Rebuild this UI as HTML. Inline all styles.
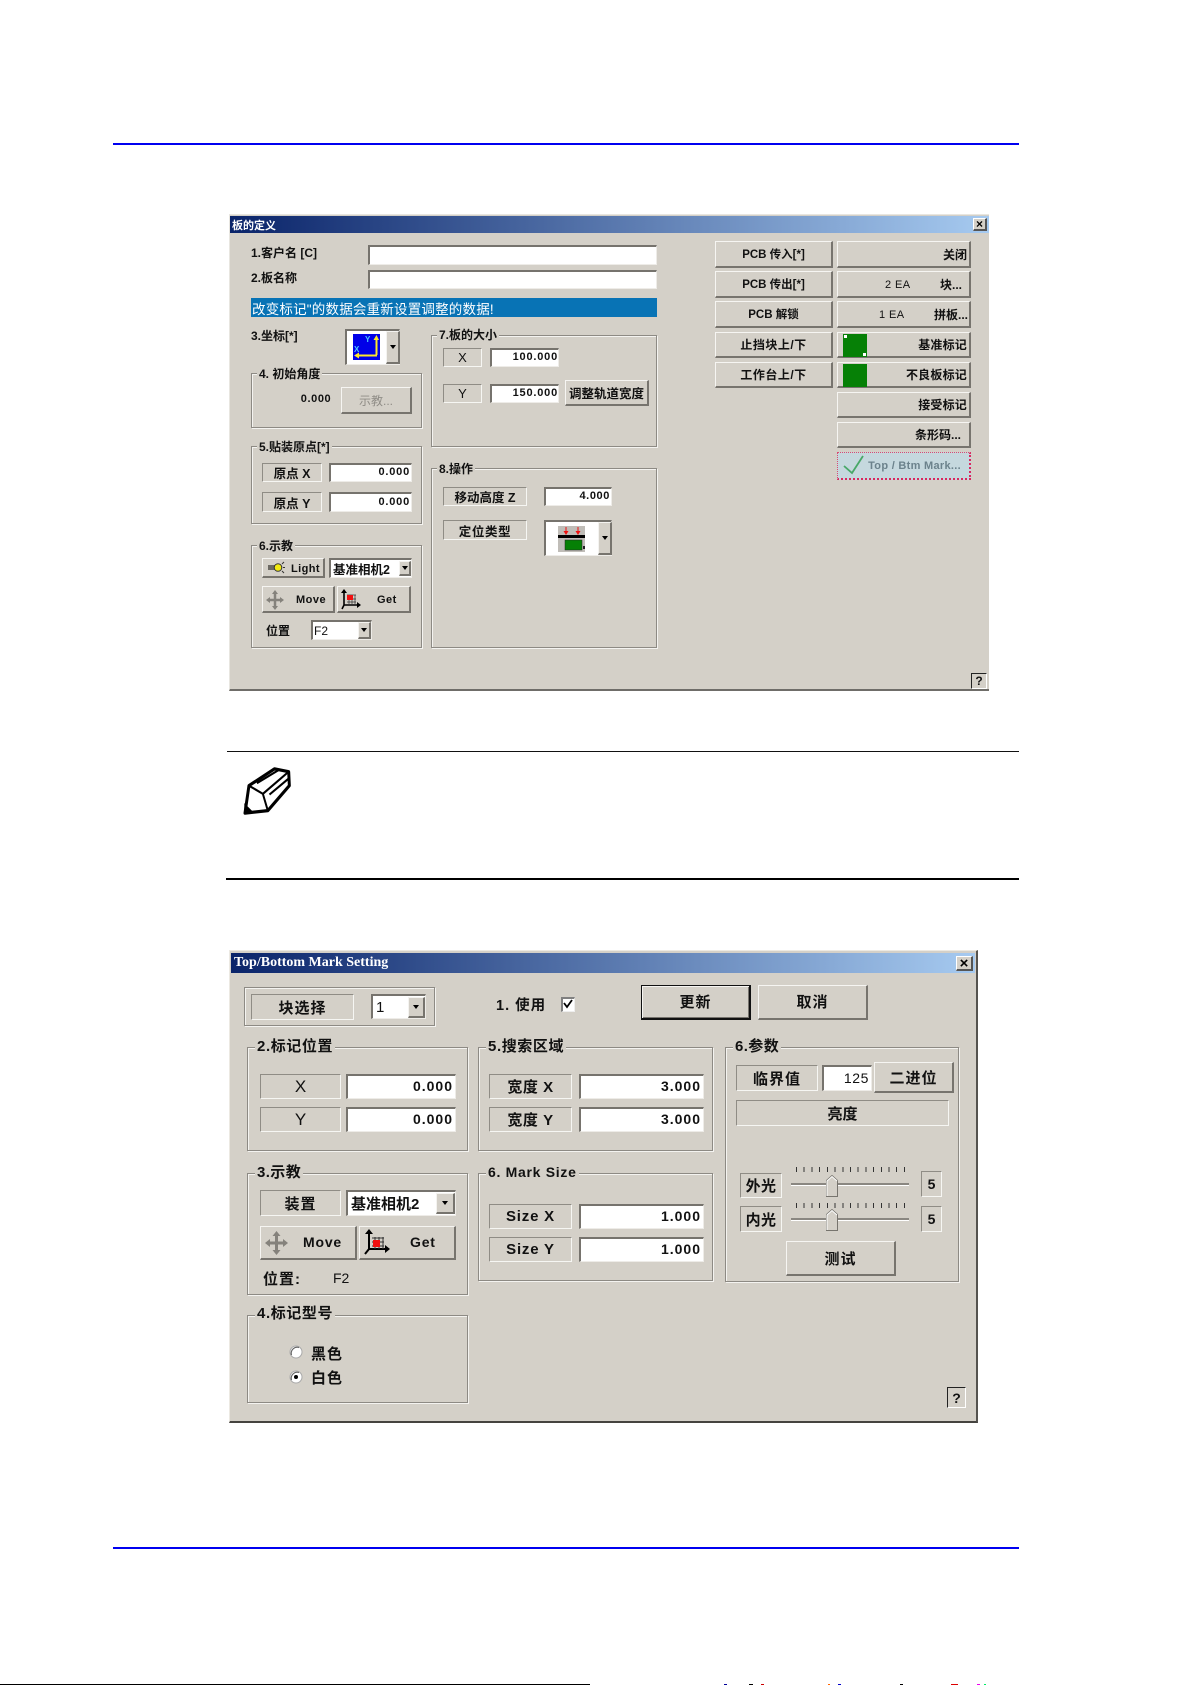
<!DOCTYPE html>
<html lang="zh"><head><meta charset="utf-8"><title>板的定义</title>
<style>
html,body{margin:0;padding:0;background:#fff}
#p{position:relative;width:1191px;height:1685px;overflow:hidden;background:#fff;font:bold 12px "Liberation Sans","Noto Sans CJK SC",sans-serif;color:#111}
#p div,#p span.a,#p svg{position:absolute;box-sizing:border-box}
.w{left:0;top:0;width:1191px;height:1685px;filter:blur(.3px)}
.dlg{background:#d4d0c8}
.c{display:flex;align-items:center;justify-content:center;white-space:nowrap}
.r{display:flex;align-items:center;justify-content:flex-end;white-space:nowrap;padding-right:4px}
.r.ed{padding-bottom:2px}
.l{display:flex;align-items:center;white-space:nowrap}
.g{border:1px solid #8d8a84;box-shadow:inset 1px 1px 0 #f4f3f0,1px 1px 0 #f4f3f0}
.lg{background:#d4d0c8;padding:0 2px;white-space:nowrap;line-height:14px}
.lab{border:1px solid;border-color:#8f8c85 #f6f6f3 #f6f6f3 #8f8c85}
.ed{background:#fff;border-style:solid;border-width:2px 1px 1px 2px;border-color:#76736d #eeece8 #eeece8 #76736d}
.btn{background:#d4d0c8;border-style:solid;border-width:1px 2px 2px 1px;border-color:#f6f5f2 #77746e #77746e #f6f5f2}
.dd{background:#d4d0c8;border-style:solid;border-width:1px 2px 2px 1px;border-color:#f4f3f0 #77746e #77746e #f4f3f0}
.dd:after{content:"";position:absolute;left:50%;top:50%;margin:-2px 0 0 -3px;border:3px solid transparent;border-top:4px solid #000;border-bottom:0}
.d2{font-size:15px}
</style></head><body><div id="p">
<div style="left:113px;top:143px;width:906px;height:2px;background:#0000f0"></div>

<!-- Dialog 1 -->
<div class="w">
<div class="dlg" style="left:229px;top:214px;width:760px;height:477px;border-top:1px solid #e8e6e0;border-left:1px solid #e8e6e0;border-bottom:2px solid #6f6d69"></div>
<div class="l" style="left:230px;top:216px;width:759px;height:17px;background:linear-gradient(90deg,#0a246a,#a6caf0);color:#fff;font-size:11px;padding-left:2px">板的定义</div>
<div class="c btn" style="left:973px;top:218px;width:14px;height:13px;font:bold 12px 'Liberation Sans',sans-serif;color:#000;border-color:#fff #555 #555 #fff">×</div>

<div class="l" style="left:251px;top:244px;width:80px;height:16px;font-size:12px">1.客户名 [C]</div>
<div class="ed" style="left:368px;top:245px;width:289px;height:20px"></div>
<div class="l" style="left:251px;top:269px;width:80px;height:16px;font-size:12px">2.板名称</div>
<div class="ed" style="left:368px;top:270px;width:289px;height:19px"></div>
<div class="l" style="left:251px;top:298px;width:406px;height:19px;background:#0873b5;color:#fff;font-size:13.500px;font-weight:400;padding-left:1px;letter-spacing:.2px">改变标记"的数据会重新设置调整的数据!</div>

<div class="l" style="left:251px;top:327px;width:60px;height:16px;font-size:12px">3.坐标[*]</div>
<div class="ed" style="left:345px;top:329px;width:55px;height:36px"></div>
<svg style="left:353px;top:334px" width="27" height="26" viewBox="0 0 27 26"><rect width="27" height="26" fill="#0000e8"/><path d="M23.5 21V5M3 21.5H24" stroke="#ffe82a" stroke-width="2" fill="none"/><path d="M20.500 6L23.500 1 26 6ZM1 21.500L6 18.500V24.500Z" fill="#ffe82a"/><text x="12" y="8" font-size="8" fill="#4fc8ff" font-family="Liberation Sans">Y</text><text x="1" y="18" font-size="8" fill="#4fc8ff" font-family="Liberation Sans">X</text></svg>
<div class="dd" style="left:386px;top:331px;width:14px;height:33px"></div>

<div class="g" style="left:251px;top:373px;width:171px;height:55px"></div>
<div class="lg" style="left:257px;top:367px;font-size:12px">4. 初始角度</div>
<div class="c" style="left:298px;top:391px;width:36px;height:16px;font-size:11px;letter-spacing:.6px">0.000</div>
<div class="c btn" style="left:341px;top:387px;width:71px;height:27px;color:#8f8c86;font-size:12px;font-weight:400">示教...</div>

<div class="g" style="left:251px;top:446px;width:171px;height:78px"></div>
<div class="lg" style="left:257px;top:440px;font-size:12px">5.贴装原点[*]</div>
<div class="c lab" style="left:262px;top:463px;width:60px;height:19px;font-size:12.500px">原点 X</div>
<div class="r ed" style="left:329px;top:463px;width:83px;height:19px;font-size:11px;letter-spacing:.8px;padding-right:1px">0.000</div>
<div class="c lab" style="left:262px;top:492px;width:60px;height:20px;font-size:12.500px">原点 Y</div>
<div class="r ed" style="left:329px;top:492px;width:83px;height:20px;font-size:11px;letter-spacing:.8px;padding-right:1px">0.000</div>

<div class="g" style="left:251px;top:545px;width:171px;height:103px"></div>
<div class="lg" style="left:257px;top:539px;font-size:12px">6.示教</div>
<div class="btn" style="left:262px;top:558px;width:63px;height:20px"></div>
<svg style="left:268px;top:561px" width="17" height="13" viewBox="0 0 17 13"><rect x="0" y="4" width="7" height="5" fill="#6d6a64"/><circle cx="10" cy="6.500" r="3.800" fill="#f2ea10" stroke="#333" stroke-width="1"/><path d="M14 3l2-2M14 10l2 2M15 6.500h2" stroke="#333"/></svg>
<div class="l" style="left:291px;top:559px;width:34px;height:20px;font-size:11px;letter-spacing:.4px">Light</div>
<div class="l ed" style="left:329px;top:558px;width:83px;height:20px;font-size:12.500px;padding-left:2px">基准相机2</div>
<div class="dd" style="left:399px;top:561px;width:12px;height:15px"></div>
<div class="btn" style="left:262px;top:586px;width:73px;height:27px"></div>
<svg style="left:266px;top:590px" width="18" height="20" viewBox="0 0 18 20"><path d="M9 3V17M2 10H16" stroke="#85827c" stroke-width="2.500"/><path d="M9 0l3 4H6zM9 20l3-4H6zM0 10l4-3v6zM18 10l-4-3v6z" fill="#85827c"/></svg>
<div class="l" style="left:296px;top:586px;width:36px;height:27px;font-size:11px;letter-spacing:.5px">Move</div>
<div class="btn" style="left:337px;top:586px;width:74px;height:27px"></div>
<svg style="left:341px;top:589px" width="20" height="21" viewBox="0 0 20 21"><path d="M3 3V16L1 20M3 16H18" stroke="#000" stroke-width="1.600" fill="none"/><path d="M3 0l3 4H0zM20 16l-4-3v6z" fill="#000"/><path d="M6 6H15M6 10H15M6 13H15M8 6V16M11 6V16M14 6V16" stroke="#333" stroke-width=".7"/><rect x="6" y="6" width="6" height="5" fill="#f01010"/></svg>
<div class="l" style="left:377px;top:586px;width:30px;height:27px;font-size:11px;letter-spacing:.5px">Get</div>
<div class="l" style="left:266px;top:622px;width:30px;height:16px;font-size:12px">位置</div>
<div class="l ed" style="left:311px;top:620px;width:61px;height:20px;font-size:12px;font-weight:400;padding-left:1px">F2</div>
<div class="dd" style="left:358px;top:622px;width:13px;height:17px"></div>

<div class="g" style="left:431px;top:335px;width:226px;height:112px"></div>
<div class="lg" style="left:437px;top:328px;font-size:12px">7.板的大小</div>
<div class="c lab" style="left:443px;top:348px;width:39px;height:19px;font-weight:400;font-size:13px">X</div>
<div class="r ed" style="left:490px;top:348px;width:69px;height:19px;font-size:11px;letter-spacing:.8px;padding-right:0">100.000</div>
<div class="c lab" style="left:443px;top:384px;width:39px;height:19px;font-weight:400;font-size:13px">Y</div>
<div class="r ed" style="left:490px;top:384px;width:69px;height:19px;font-size:11px;letter-spacing:.8px;padding-right:0">150.000</div>
<div class="c btn" style="left:565px;top:380px;width:84px;height:26px;font-size:12.500px">调整轨道宽度</div>

<div class="g" style="left:431px;top:468px;width:226px;height:180px"></div>
<div class="lg" style="left:437px;top:462px;font-size:12px">8.操作</div>
<div class="c lab" style="left:443px;top:487px;width:84px;height:19px;font-size:12.500px">移动高度 Z</div>
<div class="r ed" style="left:544px;top:487px;width:68px;height:19px;font-size:11px;letter-spacing:.6px;padding-right:1px">4.000</div>
<div class="c lab" style="left:443px;top:520px;width:84px;height:20px;font-size:12.500px;letter-spacing:.6px">定位类型</div>
<div class="ed" style="left:544px;top:520px;width:68px;height:36px"></div>
<svg style="left:558px;top:526px" width="27" height="26" viewBox="0 0 27 26"><rect width="27" height="26" fill="#c0bdb8"/><path d="M8 1V7M20 1V7" stroke="#f01010"/><path d="M8 9L5.500 5H10.500ZM20 9L17.500 5H22.500Z" fill="#f01010"/><rect y="9" width="27" height="3" fill="#000"/><rect x="7" y="14" width="17" height="10" fill="#058005" stroke="#222" stroke-width=".5"/><rect x="25" y="20" width="2" height="3" fill="#222"/></svg>
<div class="dd" style="left:598px;top:522px;width:14px;height:33px"></div>

<div class="c btn" style="left:715px;top:241px;width:118px;height:27px;font-size:11.500px">PCB 传入[*]</div>
<div class="c btn" style="left:715px;top:271px;width:118px;height:27px;font-size:11.500px">PCB 传出[*]</div>
<div class="c btn" style="left:715px;top:301px;width:118px;height:27px;font-size:11.500px">PCB 解锁</div>
<div class="c btn" style="left:715px;top:332px;width:118px;height:26px;font-size:12px;letter-spacing:.5px">止挡块上/下</div>
<div class="c btn" style="left:715px;top:362px;width:118px;height:26px;font-size:12px;letter-spacing:.5px">工作台上/下</div>

<div class="r btn" style="left:837px;top:241px;width:134px;height:27px;padding-right:2px">关闭</div>
<div class="btn" style="left:837px;top:271px;width:134px;height:27px"></div>
<div class="l" style="left:885px;top:271px;width:30px;height:27px;font-size:11px;font-weight:400;letter-spacing:.4px">2 EA</div>
<div class="l" style="left:940px;top:271px;width:30px;height:27px;font-size:12px">块...</div>
<div class="btn" style="left:837px;top:301px;width:134px;height:27px"></div>
<div class="l" style="left:879px;top:301px;width:30px;height:27px;font-size:11px;font-weight:400;letter-spacing:.4px">1 EA</div>
<div class="l" style="left:934px;top:301px;width:36px;height:27px;font-size:12px">拼板...</div>
<div class="r btn" style="left:837px;top:332px;width:134px;height:26px;padding-right:2px;letter-spacing:.2px">基准标记</div>
<div style="left:843px;top:334px;width:24px;height:23px;background:#068006"></div>
<div style="left:844px;top:335px;width:3px;height:3px;background:#fff"></div>
<div style="left:863px;top:353px;width:3px;height:3px;background:#fff"></div>
<div class="r btn" style="left:837px;top:362px;width:134px;height:26px;padding-right:2px;letter-spacing:.2px">不良板标记</div>
<div style="left:843px;top:364px;width:24px;height:23px;background:#068006"></div>
<div class="r btn" style="left:837px;top:392px;width:134px;height:26px;padding-right:2px;letter-spacing:.2px">接受标记</div>
<div class="r btn" style="left:837px;top:422px;width:134px;height:26px;padding-right:8px">条形码...</div>
<div class="r" style="left:837px;top:452px;width:134px;height:28px;background:#c5d8de;border:1px dotted #d94a72;border-bottom:2px dotted #d9285f;border-right:2px dotted #d9285f;color:#6b828c;font-size:11px;padding-right:8px;letter-spacing:.3px;padding-top:1px">Top / Btm Mark...</div>
<svg style="left:843px;top:454px" width="22" height="22" viewBox="0 0 22 22"><path d="M1 12L9 19 20 2" stroke="#48a868" stroke-width="1.800" fill="none"/></svg>
<div class="c" style="left:971px;top:673px;width:16px;height:16px;border:1px solid;border-color:#222 #fff #fff #222;font:bold 12px 'Liberation Sans',sans-serif">?</div>
</div>

<!-- Note -->
<div style="left:227px;top:751px;width:792px;height:1px;background:#111"></div>
<svg style="left:243px;top:766px" width="48" height="50" viewBox="130 100 145 140" preserveAspectRatio="none"><path d="M148 155L225 108 268 116 270 155 205 225 136 232Z" fill="#fff" stroke="#000" stroke-width="9" stroke-linejoin="round"/><path d="M148 155L190 178 205 225M190 178L268 116M172 148L240 110M210 180L268 135" stroke="#000" stroke-width="6" fill="none"/><path d="M134 235V204L162 230Z" fill="#000"/></svg>
<div style="left:226px;top:878px;width:793px;height:2px;background:#000"></div>

<!-- Dialog 2 -->
<div class="w d2">
<div class="dlg" style="left:229px;top:950px;width:749px;height:473px;border-top:1px solid #ece9e2;border-left:1px solid #ece9e2;border-right:2px solid #55534f;border-bottom:2px solid #45433f"></div>
<div class="l" style="left:231px;top:953px;width:744px;height:20px;background:linear-gradient(90deg,#0a246a,#a6caf0);color:#fff;font:bold 14px 'Liberation Serif',serif;padding-left:3px">Top/Bottom Mark Setting</div>
<div class="c btn" style="left:956px;top:956px;width:17px;height:15px;font:bold 15px 'Liberation Sans',sans-serif;color:#000;border-color:#fff #555 #555 #fff">×</div>

<div class="g" style="left:244px;top:987px;width:191px;height:39px"></div>
<div class="c lab" style="left:251px;top:994px;width:103px;height:26px;letter-spacing:1px">块选择</div>
<div class="l ed" style="left:371px;top:994px;width:55px;height:25px;padding-left:3px;font-size:15px;font-weight:400">1</div>
<div class="dd" style="left:408px;top:997px;width:17px;height:21px"></div>
<div class="l" style="left:496px;top:995px;width:60px;height:18px;font-size:14.500px;letter-spacing:1px">1. 使用</div>
<div class="ed" style="left:561px;top:997px;width:14px;height:15px;border-color:#808080 #eee #eee #808080"></div>
<svg style="left:563px;top:999px" width="10" height="10" viewBox="0 0 10 10"><path d="M1 4L4 8 9 1" stroke="#000" stroke-width="1.800" fill="none"/></svg>
<div class="c btn" style="left:641px;top:985px;width:110px;height:35px;border:2px solid #111;border-left-width:1px;border-top-width:1px;letter-spacing:1px;box-shadow:inset 1px 1px 0 #f6f5f2,inset -1px -1px 0 #77746e;padding-bottom:2px">更新</div>
<div class="c btn" style="left:758px;top:985px;width:110px;height:35px;letter-spacing:1px;padding-bottom:2px">取消</div>

<div class="g" style="left:247px;top:1047px;width:221px;height:104px"></div>
<div class="lg" style="left:255px;top:1040px;letter-spacing:.6px">2.标记位置</div>
<div class="c lab" style="left:260px;top:1074px;width:81px;height:25px;font-weight:400;font-size:17px">X</div>
<div class="r ed" style="left:346px;top:1074px;width:110px;height:25px;font-size:14px;letter-spacing:1px;padding-right:2px">0.000</div>
<div class="c lab" style="left:260px;top:1107px;width:81px;height:25px;font-weight:400;font-size:17px">Y</div>
<div class="r ed" style="left:346px;top:1107px;width:110px;height:25px;font-size:14px;letter-spacing:1px;padding-right:2px">0.000</div>

<div class="g" style="left:478px;top:1047px;width:235px;height:104px"></div>
<div class="lg" style="left:486px;top:1040px;letter-spacing:.6px">5.搜索区域</div>
<div class="c lab" style="left:489px;top:1074px;width:83px;height:25px;font-size:15px;letter-spacing:.5px">宽度 X</div>
<div class="r ed" style="left:579px;top:1074px;width:125px;height:25px;font-size:14px;letter-spacing:1px;padding-right:2px">3.000</div>
<div class="c lab" style="left:489px;top:1107px;width:83px;height:25px;font-size:15px;letter-spacing:.5px">宽度 Y</div>
<div class="r ed" style="left:579px;top:1107px;width:125px;height:25px;font-size:14px;letter-spacing:1px;padding-right:2px">3.000</div>

<div class="g" style="left:247px;top:1173px;width:221px;height:122px"></div>
<div class="lg" style="left:255px;top:1166px;letter-spacing:.4px">3.示教</div>
<div class="c lab" style="left:260px;top:1190px;width:81px;height:26px;letter-spacing:1px">装置</div>
<div class="l ed" style="left:346px;top:1190px;width:110px;height:26px;padding-left:3px;font-size:15px">基准相机2</div>
<div class="dd" style="left:436px;top:1193px;width:19px;height:21px"></div>
<div class="btn" style="left:260px;top:1226px;width:97px;height:34px"></div>
<svg style="left:265px;top:1231px" width="23" height="24" viewBox="0 0 23 24"><path d="M11.500 4V20M3 12H20" stroke="#85827c" stroke-width="3"/><path d="M11.500 0l4 5h-8zM11.500 24l4-5h-8zM0 12l5-4v8zM23 12l-5-4v8z" fill="#85827c"/></svg>
<div class="l" style="left:303px;top:1225px;width:50px;height:34px;font-size:14px;letter-spacing:.8px">Move</div>
<div class="btn" style="left:359px;top:1226px;width:97px;height:34px"></div>
<svg style="left:364px;top:1229px" width="26" height="27" viewBox="0 0 26 27"><path d="M5 4V20L1 25M5 20H23" stroke="#000" stroke-width="2" fill="none"/><path d="M5 0l4 5H1zM26 20l-5-4v8z" fill="#000"/><path d="M8 9H20M8 13H20M8 17H20M11 8V20M15 8V20M19 8V20" stroke="#333"/><rect x="9" y="11" width="7" height="7" fill="#f01010"/></svg>
<div class="l" style="left:410px;top:1225px;width:40px;height:34px;font-size:14px;letter-spacing:.8px">Get</div>
<div class="l" style="left:263px;top:1269px;width:50px;height:19px;letter-spacing:1px">位置:</div>
<div class="l" style="left:333px;top:1269px;width:30px;height:18px;font-size:14px;font-weight:400">F2</div>

<div class="g" style="left:247px;top:1315px;width:221px;height:88px"></div>
<div class="lg" style="left:255px;top:1307px;letter-spacing:.6px">4.标记型号</div>
<svg style="left:289px;top:1345px" width="14" height="14" viewBox="0 0 14 14"><circle cx="7" cy="7" r="6" fill="#fff" stroke="#aaa" stroke-width="1"/><path d="M2.500 10A6 6 0 0 1 10 2.500" stroke="#666" fill="none" stroke-width="1.200"/></svg>
<div class="l" style="left:311px;top:1344px;width:40px;height:18px;letter-spacing:1px">黑色</div>
<svg style="left:289px;top:1370px" width="14" height="14" viewBox="0 0 14 14"><circle cx="7" cy="7" r="6" fill="#fff" stroke="#aaa" stroke-width="1"/><path d="M2.500 10A6 6 0 0 1 10 2.500" stroke="#666" fill="none" stroke-width="1.200"/><circle cx="7" cy="7" r="2" fill="#000"/></svg>
<div class="l" style="left:311px;top:1368px;width:40px;height:18px;letter-spacing:1px">白色</div>

<div class="g" style="left:478px;top:1173px;width:235px;height:108px"></div>
<div class="lg" style="left:486px;top:1165px;font-size:14px;letter-spacing:.7px">6. Mark Size</div>
<div class="c lab" style="left:489px;top:1204px;width:83px;height:25px;font-size:15px;letter-spacing:.8px">Size X</div>
<div class="r ed" style="left:579px;top:1204px;width:125px;height:25px;font-size:14px;letter-spacing:1px;padding-right:2px">1.000</div>
<div class="c lab" style="left:489px;top:1237px;width:83px;height:25px;font-size:15px;letter-spacing:.8px">Size Y</div>
<div class="r ed" style="left:579px;top:1237px;width:125px;height:25px;font-size:14px;letter-spacing:1px;padding-right:2px">1.000</div>

<div class="g" style="left:725px;top:1047px;width:234px;height:235px"></div>
<div class="lg" style="left:733px;top:1040px;letter-spacing:.4px">6.参数</div>
<div class="c lab" style="left:736px;top:1065px;width:82px;height:26px;letter-spacing:1px">临界值</div>
<div class="r ed" style="left:822px;top:1065px;width:50px;height:26px;font-size:14px;font-weight:400;letter-spacing:.6px;padding-right:2px">125</div>
<div class="c btn" style="left:874px;top:1062px;width:80px;height:31px;letter-spacing:1px">二进位</div>
<div class="c lab" style="left:736px;top:1100px;width:213px;height:26px">亮度</div>

<div class="c lab" style="left:740px;top:1173px;width:42px;height:25px;letter-spacing:.4px">外光</div>
<div style="left:796px;top:1167px;width:109px;height:5px;background:repeating-linear-gradient(90deg,#333 0 1px,transparent 1px 7.710px)"></div>
<div style="left:791px;top:1183px;width:118px;height:3px;background:#8a8781;border-bottom:1px solid #fff"></div>
<svg style="left:826px;top:1175px" width="12" height="22" viewBox="0 0 12 22"><path d="M.5 21.500V5.500L6 .5 11.500 5.500V21.500Z" fill="#d4d0c8" stroke="#77746e"/><path d="M1 21V6L6 1.500 11 6" stroke="#fff" fill="none"/></svg>
<div class="c lab" style="left:921px;top:1171px;width:21px;height:26px;font-size:14px">5</div>

<div class="c lab" style="left:740px;top:1206px;width:42px;height:26px;letter-spacing:.4px">内光</div>
<div style="left:796px;top:1203px;width:109px;height:5px;background:repeating-linear-gradient(90deg,#333 0 1px,transparent 1px 7.710px)"></div>
<div style="left:791px;top:1218px;width:118px;height:3px;background:#8a8781;border-bottom:1px solid #fff"></div>
<svg style="left:826px;top:1209px" width="12" height="22" viewBox="0 0 12 22"><path d="M.5 21.500V5.500L6 .5 11.500 5.500V21.500Z" fill="#d4d0c8" stroke="#77746e"/><path d="M1 21V6L6 1.500 11 6" stroke="#fff" fill="none"/></svg>
<div class="c lab" style="left:921px;top:1206px;width:21px;height:26px;font-size:14px">5</div>

<div class="c btn" style="left:786px;top:1241px;width:110px;height:35px;letter-spacing:1px">测试</div>
<div class="c" style="left:947px;top:1387px;width:19px;height:21px;border:1px solid;border-color:#222 #fff #fff #222;font:bold 14px 'Liberation Sans',sans-serif">?</div>
</div>

<div style="left:113px;top:1547px;width:906px;height:2px;background:#0000f0"></div>
<div style="left:0;top:1684px;width:590px;height:1px;background:#000"></div>
<div style="left:724px;top:1684px;width:3px;height:1px;background:#009"></div>
<div style="left:749px;top:1684px;width:4px;height:1px;background:#000"></div>
<div style="left:761px;top:1684px;width:3px;height:1px;background:#c00"></div>
<div style="left:828px;top:1684px;width:2px;height:1px;background:#f60"></div>
<div style="left:838px;top:1684px;width:3px;height:1px;background:#00c"></div>
<div style="left:900px;top:1684px;width:3px;height:1px;background:#000"></div>
<div style="left:951px;top:1684px;width:7px;height:1px;background:#d00"></div>
<div style="left:977px;top:1684px;width:3px;height:1px;background:#e0e"></div>
<div style="left:984px;top:1684px;width:2px;height:1px;background:#0e6"></div>
</div></body></html>
